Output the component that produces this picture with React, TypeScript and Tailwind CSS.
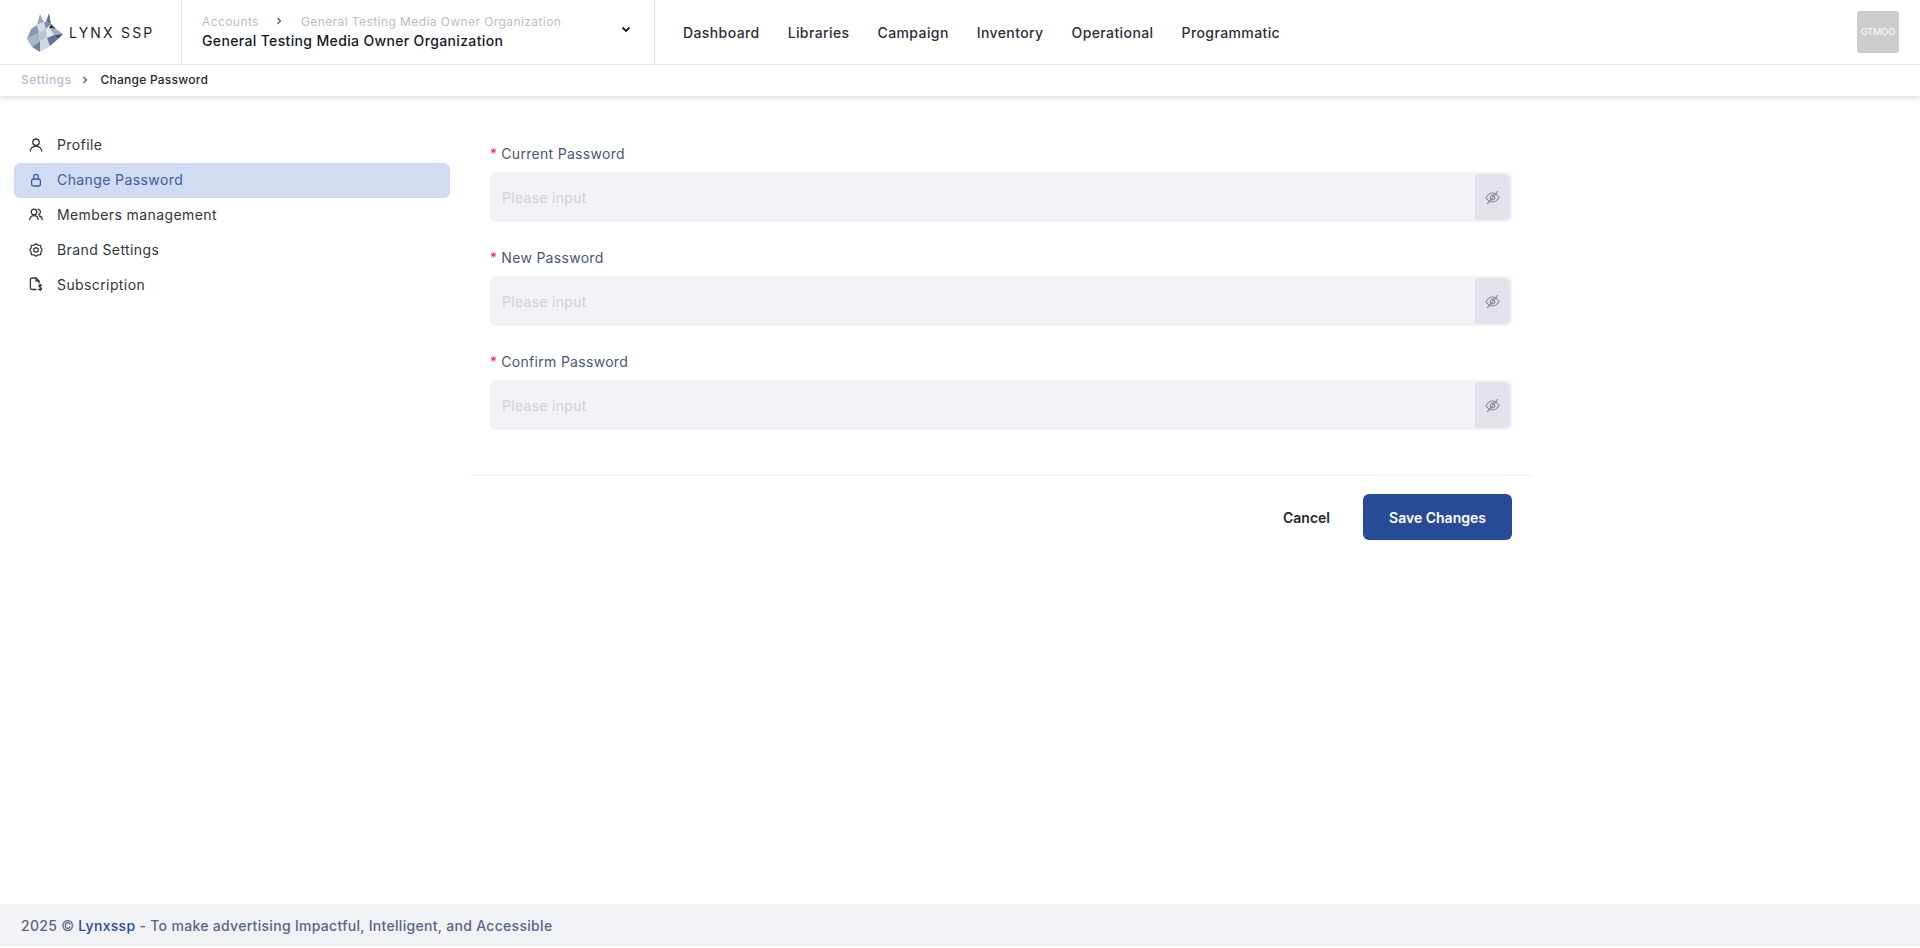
import React from "react";

const font = "font-['Inter','Liberation_Sans',sans-serif]";

function Wolf() {
  return (
    <svg width="37" height="42" viewBox="0 0 37 42" className="shrink-0">
      <polygon points="10,14 13,3 17,11" fill="#9aa7bc" />
      <polygon points="19,11 22,2 24,13" fill="#5f6e88" />
      <polygon points="10,14 17,11 19,18 12,22" fill="#d3dae5" />
      <polygon points="17,11 19,11 24,13 19,18" fill="#7c8aa3" />
      <polygon points="24,13 29,18 22,17" fill="#26344f" />
      <polygon points="22,17 29,18 36,23 27,24" fill="#a3afc3" />
      <polygon points="27,24 36,23 31,28" fill="#3f4e6b" />
      <polygon points="19,18 22,17 27,24 20,27" fill="#e2e7ef" />
      <polygon points="12,22 19,18 20,27 13,30" fill="#b7c2d3" />
      <polygon points="10,14 12,22 0,28 4,18" fill="#8a99b2" />
      <polygon points="0,28 12,22 13,30 5,36" fill="#a9b5c8" />
      <polygon points="13,30 20,27 23,35 13,41" fill="#cdd5e1" />
      <polygon points="20,27 27,24 31,28 23,35" fill="#62728e" />
      <polygon points="5,36 13,30 13,41" fill="#74839d" />
    </svg>
  );
}

function Chevron({ className, size = 8 }: { className?: string; size?: number }) {
  return (
    <svg width={size} height={size} viewBox="0 0 8 8" fill="none" stroke="currentColor" strokeWidth="1.2" className={className}>
      <path d="M2.5 1 L5.5 4 L2.5 7" />
    </svg>
  );
}

function UserIcon() {
  return (
    <svg width="14" height="14" viewBox="0 0 14 14" fill="none" stroke="currentColor" strokeWidth="1.3" strokeLinecap="round">
      <circle cx="7" cy="4.2" r="3.2" />
      <path d="M1.2 13 C1.8 9.8 4 8.4 7 8.4 C10 8.4 12.2 9.8 12.8 13" />
    </svg>
  );
}
function LockIcon() {
  return (
    <svg width="14" height="14" viewBox="0 0 14 14" fill="none" stroke="currentColor" strokeWidth="1.3" strokeLinecap="round">
      <rect x="2.6" y="6" width="8.8" height="7" rx="2" />
      <path d="M4.8 6 V3.6 A2.2 2.2 0 0 1 9.2 3.6 V6" />
    </svg>
  );
}
function UsersIcon() {
  return (
    <svg width="14" height="14" viewBox="0 0 14 14" fill="none" stroke="currentColor" strokeWidth="1.3" strokeLinecap="round">
      <circle cx="5" cy="4" r="2.8" />
      <path d="M0.8 11.5 C1.2 8.8 2.8 7.6 5 7.6 C7.2 7.6 8.8 8.8 9.2 11.5" />
      <path d="M9 1.2 A2.8 2.8 0 0 1 9.6 6.6" />
      <path d="M10.4 8 C12 8.4 12.9 9.6 13.2 11.5" />
    </svg>
  );
}
function GearIcon() {
  return (
    <svg width="14" height="14" viewBox="0 0 14 14" fill="none" stroke="currentColor" strokeWidth="1.3" strokeLinejoin="round">
      <path d="M7 0.8 L9 2.1 L11.6 2.4 L12 5 L13.2 7 L12 9 L11.6 11.6 L9 11.9 L7 13.2 L5 11.9 L2.4 11.6 L2 9 L0.8 7 L2 5 L2.4 2.4 L5 2.1 Z" />
      <path d="M7 4.6 L9.1 5.8 V8.2 L7 9.4 L4.9 8.2 V5.8 Z" />
    </svg>
  );
}
function SubIcon() {
  return (
    <svg width="14" height="15" viewBox="0 0 14 15" fill="none" stroke="currentColor" strokeWidth="1.3" strokeLinecap="round" strokeLinejoin="round">
      <path d="M7 12.5 H3 A1.6 1.6 0 0 1 1.4 10.9 V2.6 A1.6 1.6 0 0 1 3 1 H7 L10 4 V6" />
      <path d="M7 1 V4 H10" />
      <path d="M12.6 8.4 C12 7.6 10 7.6 9.8 9 C9.7 10.4 12.8 10.2 12.6 11.8 C12.4 13 10.2 13 9.5 12.1 M11.2 7.2 V13.6" strokeWidth="1.1" />
    </svg>
  );
}
function EyeOff() {
  return (
    <svg width="15" height="15" viewBox="0 0 15 15" fill="none" stroke="#8b8c94" strokeWidth="1.2" strokeLinecap="round">
      <path d="M1 7.5 C2.8 4.4 5 3 7.5 3 C10 3 12.2 4.4 14 7.5 C12.2 10.6 10 12 7.5 12 C5 12 2.8 10.6 1 7.5 Z" />
      <circle cx="7.5" cy="7.5" r="2.3" />
      <path d="M12.6 1.4 L2.4 13.6" />
    </svg>
  );
}

const navItems = ["Dashboard", "Libraries", "Campaign", "Inventory", "Operational", "Programmatic"];
const sideItems = [
  { label: "Profile", icon: <UserIcon /> },
  { label: "Change Password", icon: <LockIcon />, active: true },
  { label: "Members management", icon: <UsersIcon /> },
  { label: "Brand Settings", icon: <GearIcon /> },
  { label: "Subscription", icon: <SubIcon /> },
];

function PasswordField({ label }: { label: string }) {
  return (
    <div className="flex flex-col">
      <label className="flex h-[18px] items-center text-[14px] leading-[18px] tracking-[0.3px] text-[#4b5675]">
        <span className="mr-[4px] text-[#f8285a]">*</span>
        {label}
      </label>
      <div className="mt-[9px] flex h-[50px] overflow-hidden rounded-[6px] border-2 border-[#f1f2f6] bg-[#f1f2f6]">
        <input
          placeholder="Please input"
          className="h-full min-w-0 flex-1 bg-transparent pl-[10px] text-[14px] tracking-[0.3px] outline-none placeholder:text-[#cfd0da]"
        />
        <div className="flex w-[35px] items-center justify-center rounded-r-[5px] bg-[#e2e3ea]">
          <EyeOff />
        </div>
      </div>
    </div>
  );
}

export default function App() {
  return (
    <div className={`flex h-[948px] flex-col bg-white ${font}`}>
      <header className="relative z-10 shadow-[0_2px_6px_rgba(60,60,90,0.18)]">
        <div className="flex h-[65px] items-stretch border-b border-[#e4e4ef]">
          <div className="flex w-[182px] items-center gap-[5px] border-r border-[#e4e4ef] pl-[27px]">
            <Wolf />
            <span className="text-[14px] font-normal tracking-[2.2px] text-[#26272f]">LYNX SSP</span>
          </div>
          <div className="relative flex w-[473px] flex-col justify-center border-r border-[#e4e4ef] pl-[20px]">
            <div className="flex items-center text-[12px] leading-[18px] tracking-[0.42px] text-[#b9bbd0]">
              <span>Accounts</span>
              <Chevron className="mb-[3px] ml-[16px] mr-[18px] text-[#4b5675]" />
              <span>General Testing Media Owner Organization</span>
            </div>
            <div className="text-[14px] font-medium leading-[20px] tracking-[0.35px] text-[#17181f]">General Testing Media Owner Organization</div>
            <svg width="12" height="12" viewBox="0 0 12 12" fill="none" stroke="#17181f" strokeWidth="1.8" className="absolute right-[22px] top-[23px]">
              <path d="M2.5 4.5 L6 8 L9.5 4.5" />
            </svg>
          </div>
          <nav className="flex items-center gap-[28px] pl-[28px]">
            {navItems.map((n) => (
              <span key={n} className="text-[14px] font-medium tracking-[0.4px] text-[#2c2e3a]">
                {n}
              </span>
            ))}
          </nav>
          <div className="ml-auto flex items-center pr-[21px]">
            <div className="flex h-[42px] w-[42px] items-center justify-center rounded-[3px] bg-[#cccccc] text-[9px] text-white">GTMOO</div>
          </div>
        </div>
        <div className="flex h-[31px] items-center pb-[2px] pl-[21px] text-[12px]">
          <span className="font-medium tracking-[0.45px] text-[#b9bbd0]">Settings</span>
          <Chevron className="ml-[10px] mr-[11px] text-[#4b5675]" />
          <span className="font-medium tracking-[0.25px] text-[#26272f]">Change Password</span>
        </div>
      </header>

      <main className="flex flex-1">
        <aside className="w-[470px] pl-[14px] pr-[20px] pt-[32px]">
          {sideItems.map((s) => (
            <div
              key={s.label}
              className={`flex h-[35px] items-center rounded-[6px] pb-[2px] pl-[15px] text-[14px] tracking-[0.4px] ${s.active ? "bg-[#d1dbf1] text-[#3d5aa0]" : "text-[#33343e]"}`}
            >
              <span className="flex w-[28px] shrink-0 items-center">{s.icon}</span>
              {s.label}
            </div>
          ))}
        </aside>
        <section className="w-[1063px] pt-[49px]">
          <div className="flex flex-col gap-[27px] pl-[20px] pr-[21px]">
            <PasswordField label="Current Password" />
            <PasswordField label="New Password" />
            <PasswordField label="Confirm Password" />
          </div>
          <div className="mt-[45px] flex items-center justify-end gap-[33px] border-t border-[#f1f1f4] pl-[20px] pr-[21px] pt-[18px]">
            <button className="text-[14px] font-semibold text-[#26272f]">Cancel</button>
            <button className="h-[46px] w-[149px] rounded-[6px] bg-[#284b96] text-[14px] font-semibold text-white">Save Changes</button>
          </div>
        </section>
      </main>

      <footer className="mb-[2px] flex h-[42px] items-center bg-[#f1f2f6] pl-[21px] text-[14px] font-medium tracking-[0.3px] text-[#5a6488]">
        <span>2025 <span className="font-normal">©</span>&nbsp;</span>
        <span className="text-[#284b96]">Lynxssp</span>
        <span>&nbsp;- To make advertising Impactful, Intelligent, and Accessible</span>
      </footer>
    </div>
  );
}
